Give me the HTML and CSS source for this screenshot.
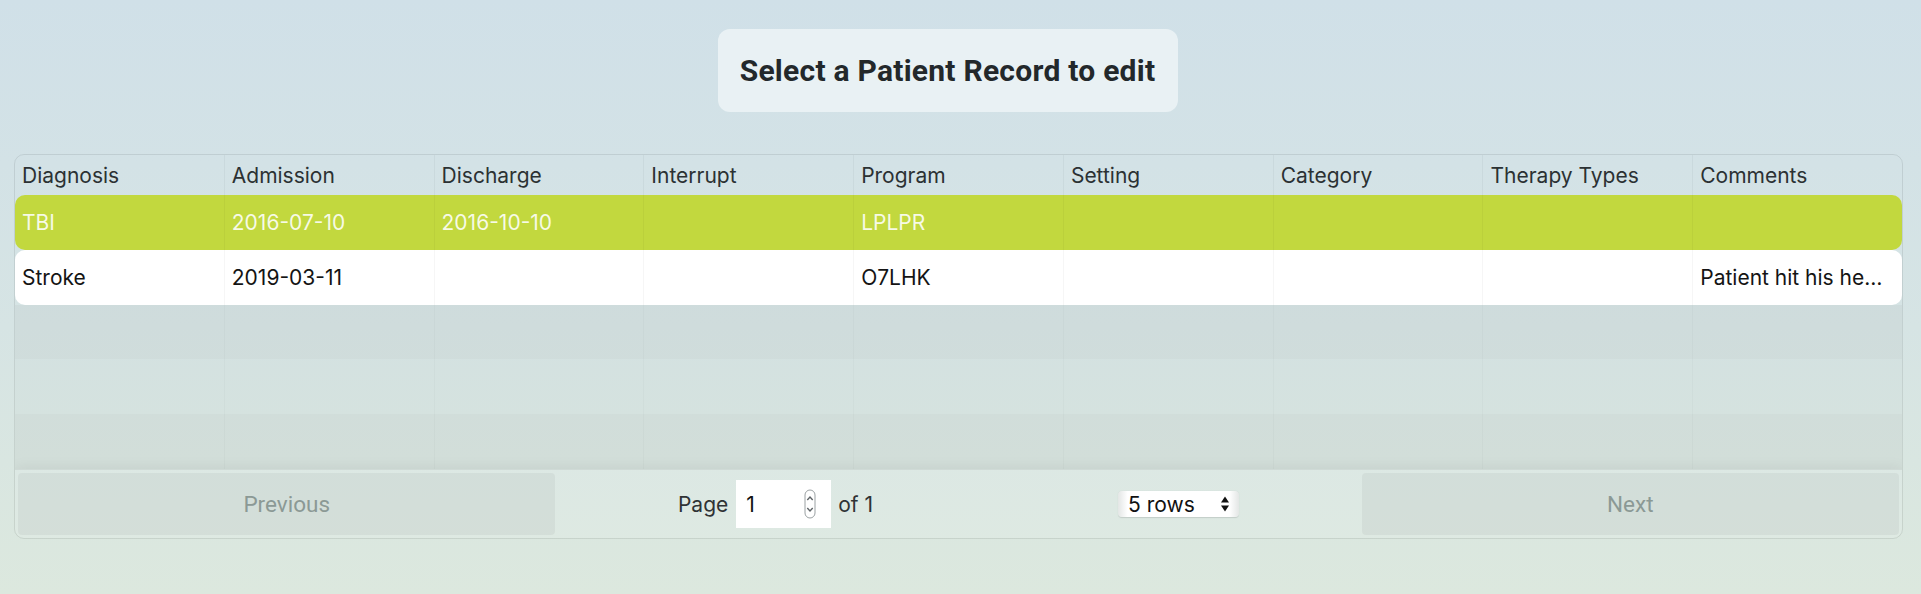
FILE: index.html
```html
<!DOCTYPE html>
<html lang="en">
<head>
<meta charset="utf-8">
<title>Select a Patient Record</title>
<link rel="stylesheet" href="styles.css">
</head>
<body>
<div class="page">
  <div class="title-wrap">
    <h1 class="title">Select a Patient Record to edit</h1>
  </div>

  <div class="table">
    <div class="thead">
      <div class="th">Diagnosis</div>
      <div class="th">Admission</div>
      <div class="th">Discharge</div>
      <div class="th">Interrupt</div>
      <div class="th">Program</div>
      <div class="th">Setting</div>
      <div class="th">Category</div>
      <div class="th">Therapy Types</div>
      <div class="th last">Comments</div>
    </div>
    <div class="tbody">
      <div class="tr selected">
        <div class="td">TBI</div>
        <div class="td">2016-07-10</div>
        <div class="td">2016-10-10</div>
        <div class="td"></div>
        <div class="td">LPLPR</div>
        <div class="td"></div>
        <div class="td"></div>
        <div class="td"></div>
        <div class="td last"></div>
      </div>
      <div class="tr filled">
        <div class="td">Stroke</div>
        <div class="td">2019-03-11</div>
        <div class="td"></div>
        <div class="td"></div>
        <div class="td">O7LHK</div>
        <div class="td"></div>
        <div class="td"></div>
        <div class="td"></div>
        <div class="td last">Patient hit his he…</div>
      </div>
      <div class="tr empty odd">
        <div class="td"></div><div class="td"></div><div class="td"></div><div class="td"></div><div class="td"></div><div class="td"></div><div class="td"></div><div class="td"></div><div class="td last"></div>
      </div>
      <div class="tr empty">
        <div class="td"></div><div class="td"></div><div class="td"></div><div class="td"></div><div class="td"></div><div class="td"></div><div class="td"></div><div class="td"></div><div class="td last"></div>
      </div>
      <div class="tr empty odd">
        <div class="td"></div><div class="td"></div><div class="td"></div><div class="td"></div><div class="td"></div><div class="td"></div><div class="td"></div><div class="td"></div><div class="td last"></div>
      </div>
    </div>
    <div class="pagination">
      <div class="pg-side"><button class="pg-btn" disabled>Previous</button></div>
      <div class="pg-center">
        <div class="page-info">
          <span class="pi-label">Page</span>
          <span class="page-input"><span class="page-num">1</span>
            <svg class="spin" width="12" height="30" viewBox="0 0 12 30">
              <rect x="1" y="1" width="10" height="28" rx="5" fill="#fff" stroke="#9aa0a2" stroke-width="1"/>
              <path d="M3.3 11 L6 8 L8.7 11" fill="none" stroke="#5f6467" stroke-width="1.4"/>
              <path d="M3.3 19 L6 22 L8.7 19" fill="none" stroke="#5f6467" stroke-width="1.4"/>
            </svg>
          </span>
          <span class="pi-label">of 1</span>
        </div>
        <div class="select"><span>5 rows</span>
          <svg class="sel-arrows" width="10" height="18" viewBox="0 0 10 18">
            <path d="M1 7.5 L5 1.5 L9 7.5 Z" fill="#111"/>
            <path d="M1 10.5 L5 16.5 L9 10.5 Z" fill="#111"/>
          </svg>
        </div>
      </div>
      <div class="pg-side"><button class="pg-btn" disabled>Next</button></div>
    </div>
  </div>
</div>
</body>
</html>
```

FILE: styles.css
```css
html, body {
  margin: 0;
  padding: 0;
}

body {
  width: 1921px;
  height: 594px;
  overflow: hidden;
  background: linear-gradient(to bottom, #d0e0e8 0%, #d6e4e4 55%, #dce8de 100%);
  font-family: Inter, "Liberation Sans", Arial, sans-serif;
  color: #222;
}

.page {
  padding: 29px 18px 0 14px;
}

.title-wrap {
  display: flex;
  justify-content: center;
  padding-right: 22px;
}

.title {
  margin: 0;
  width: 460px;
  height: 83px;
  box-sizing: border-box;
  display: flex;
  align-items: center;
  justify-content: center;
  background: #e9f1f4;
  border-radius: 12px;
  font-family: Roboto, "Liberation Sans", sans-serif;
  font-weight: 700;
  font-size: 30px;
  letter-spacing: 0.25px;
  color: #23282b;
}

.table {
  margin-top: 42px;
  width: 1889px;
  height: 385px;
  box-sizing: border-box;
  border: 1px solid rgba(0, 0, 0, 0.085);
  border-radius: 10px;
  display: flex;
  flex-direction: column;
  overflow: hidden;
}

.thead {
  display: flex;
  height: 40px;
  flex: none;
}

.th {
  flex: 1;
  padding-left: 7px;
  display: flex;
  align-items: center;
  font-size: 21px;
  color: #2b3133;
  border-right: 1px solid rgba(0, 0, 0, 0.04);
  min-width: 0;
}

.th.last, .td.last {
  border-right: none;
}

.tbody {
  display: flex;
  flex-direction: column;
  height: 274px;
  flex: none;
}

.tr {
  flex: 1;
  display: flex;
  border-radius: 10px;
}

.td {
  flex: 1;
  min-width: 0;
  padding: 0 7px;
  display: flex;
  align-items: center;
  font-size: 21px;
  white-space: nowrap;
  border-right: 1px solid rgba(0, 0, 0, 0.035);
}

.tr.selected {
  background: #c2d83e;
  color: rgba(255, 255, 255, 0.88);
}

.tr.filled {
  background: #ffffff;
  color: #141414;
}

.tr.empty {
  border-radius: 0;
  background: rgba(0, 0, 0, 0.012);
}

.tr.empty.odd {
  background: rgba(0, 0, 0, 0.032);
}

.tr.empty .td {
  border-right-color: rgba(0, 0, 0, 0.02);
}

.pagination {
  flex: 1;
  display: flex;
  padding: 3px;
  background: rgba(255, 255, 255, 0.1);
  border-top: 1px solid rgba(0, 0, 0, 0.06);
  box-shadow: 0 0 14px rgba(0, 0, 0, 0.08);
}

.pg-side {
  flex: 1;
  display: flex;
}

.pg-btn {
  flex: 1;
  border: none;
  border-radius: 4px;
  background: rgba(0, 0, 0, 0.045);
  font-family: Roboto, "Liberation Sans", sans-serif;
  font-size: 22.5px;
  color: #8b9995;
  padding: 0;
  cursor: default;
}

.pg-center {
  flex: 1.5;
  display: flex;
  align-items: center;
  justify-content: space-around;
}

.page-info {
  display: flex;
  align-items: center;
  font-size: 21px;
  color: #2f3335;
}

.page-input {
  margin: 0 7px 0 8px;
  width: 95px;
  height: 48px;
  box-sizing: border-box;
  background: #fff;
  display: flex;
  align-items: center;
  justify-content: space-between;
  padding: 0 15px 0 10px;
  color: #111;
}

.spin {
  display: block;
}

.select {
  width: 121px;
  height: 26px;
  box-sizing: border-box;
  padding: 0 9px 0 10px;
  display: flex;
  align-items: center;
  justify-content: space-between;
  font-size: 21px;
  color: #111;
  border-radius: 4px;
  background: linear-gradient(to right, #e3e6e5 0%, #ffffff 8%, #ffffff 92%, #e3e6e5 100%);
  box-shadow: 0 0.5px 1px rgba(0, 0, 0, 0.12);
}

.sel-arrows {
  display: block;
}
```
